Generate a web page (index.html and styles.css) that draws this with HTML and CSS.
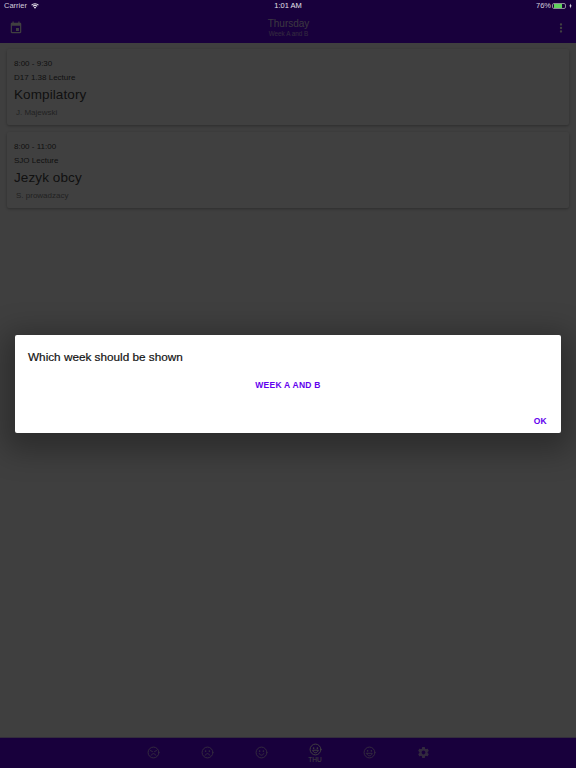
FILE: index.html
```html
<!DOCTYPE html>
<html lang="en">
<head>
<meta charset="utf-8">
<title>Thursday</title>
<link rel="stylesheet" href="styles.css">
</head>
<body>
<div class="app">
  <header class="header">
    <div class="statusbar">
      <div class="status-left">
        <span>Carrier</span>
        <svg class="wifi" viewBox="0 0 16 12"><path d="M8 11.500 5.600 8.900a3.400 3.400 0 0 1 4.800 0zM4.400 7.700 3 6.200a7 7 0 0 1 10 0l-1.400 1.500a5 5 0 0 0-7.200 0zM1.800 5 .4 3.500a10.700 10.700 0 0 1 15.200 0L14.200 5a8.800 8.800 0 0 0-12.400 0z"/></svg>
      </div>
      <div class="status-time">1:01 AM</div>
      <div class="status-right">
        <span>76%</span>
        <span class="battery"><span class="battery-fill"></span></span>
        <svg class="bolt" viewBox="0 0 5 8"><path d="M3 0 .5 4.500H2L1.700 8l2.800-4.800H3z"/></svg>
      </div>
    </div>
    <div class="toolbar">
      <svg class="tool-icon" viewBox="0 0 24 24"><path d="M17 12h-5v5h5v-5zM16 1v2H8V1H6v2H5c-1.110 0-2 .9-2 2v14c0 1.100.89 2 2 2h14c1.100 0 2-.9 2-2V5c0-1.100-.9-2-2-2h-1V1h-2zm3 18H5V8h14v11z"/></svg>
      <div class="title-block">
        <div class="title">Thursday</div>
        <div class="subtitle">Week A and B</div>
      </div>
      <svg class="tool-icon" viewBox="0 0 24 24"><path d="M12 8a2 2 0 1 0 0-4 2 2 0 0 0 0 4zm0 2a2 2 0 1 0 0 4 2 2 0 0 0 0-4zm0 6a2 2 0 1 0 0 4 2 2 0 0 0 0-4z"/></svg>
    </div>
  </header>

  <main class="list">
    <article class="card">
      <div class="line">8:00 - 9:30</div>
      <div class="line room">D17 1.38 Lecture</div>
      <div class="name">Kompilatory</div>
      <div class="teacher">J. Majewski</div>
    </article>
    <article class="card">
      <div class="line">8:00 - 11:00</div>
      <div class="line room">SJO Lecture</div>
      <div class="name">Jezyk obcy</div>
      <div class="teacher">S. prowadzacy</div>
    </article>
  </main>

  <nav class="tabs">
    <div class="tab"><svg class="face" viewBox="0 0 24 24"><circle cx="12" cy="12" r="10"/><path d="M6.500 8.500 10 10.200M17.500 8.500 14 10.200M8 17c1-2 2.400-3 4-3s3 1 4 3"/></svg></div>
    <div class="tab"><svg class="face" viewBox="0 0 24 24"><circle cx="12" cy="12" r="10"/><circle class="eye" cx="8.500" cy="9.500" r="1.500"/><circle class="eye" cx="15.500" cy="9.500" r="1.500"/><path d="M8 17c1-2 2.400-3 4-3s3 1 4 3"/></svg></div>
    <div class="tab"><svg class="face" viewBox="0 0 24 24"><circle cx="12" cy="12" r="10"/><circle class="eye" cx="8.500" cy="9.500" r="1.500"/><circle class="eye" cx="15.500" cy="9.500" r="1.500"/><path d="M8 14c1 2 2.400 3 4 3s3-1 4-3"/></svg></div>
    <div class="tab tab-active"><svg class="face" viewBox="0 0 24 24"><circle cx="12" cy="12" r="10"/><circle class="eye" cx="8.500" cy="9.500" r="1.500"/><circle class="eye" cx="15.500" cy="9.500" r="1.500"/><path d="M7 14c1 2.500 2.800 4 5 4s4-1.500 5-4z"/></svg><span class="tab-label">THU</span></div>
    <div class="tab"><svg class="face" viewBox="0 0 24 24"><circle cx="12" cy="12" r="10"/><circle class="eye" cx="8.500" cy="9" r="1.500"/><circle class="eye" cx="15.500" cy="9" r="1.500"/><path d="M7 13.500h10c-.5 3-2.500 4.500-5 4.500s-4.500-1.500-5-4.500z"/></svg></div>
    <div class="tab"><svg class="gear" viewBox="0 0 24 24"><path d="M19.430 12.980c.04-.32.07-.64.07-.98s-.03-.66-.07-.98l2.110-1.650c.19-.15.24-.42.12-.64l-2-3.460c-.12-.22-.39-.3-.61-.22l-2.490 1c-.52-.4-1.080-.73-1.690-.98l-.38-2.650A.488.488 0 0 0 14 2h-4c-.25 0-.46.18-.49.42l-.38 2.650c-.61.25-1.170.59-1.690.98l-2.490-1c-.23-.09-.49 0-.61.22l-2 3.460c-.13.22-.07.49.12.64l2.110 1.650c-.04.32-.07.65-.07.98s.03.66.07.98l-2.110 1.650c-.19.15-.24.42-.12.64l2 3.460c.12.22.39.3.61.22l2.490-1c.52.4 1.080.73 1.690.98l.38 2.650c.03.24.24.42.49.42h4c.25 0 .46-.18.49-.42l.38-2.650c.61-.25 1.170-.59 1.690-.98l2.490 1c.23.09.49 0 .61-.22l2-3.460c.12-.22.07-.49-.12-.64l-2.110-1.650zM12 15.500c-1.930 0-3.500-1.570-3.500-3.500s1.570-3.500 3.500-3.500 3.500 1.570 3.500 3.500-1.570 3.500-3.500 3.500z"/></svg></div>
  </nav>

  <div class="scrim">
    <section class="dialog">
      <h2 class="dialog-title">Which week should be shown</h2>
      <button class="week-option">WEEK A AND B</button>
      <div class="dialog-actions"><button class="ok">OK</button></div>
    </section>
  </div>
</div>
</body>
</html>
```

FILE: styles.css
```css
* { box-sizing: border-box; }
html, body { margin: 0; height: 100%; }
body { font-family: "Liberation Sans", Arial, sans-serif; background: #fafafa; overflow: hidden; }
.app { position: relative; display: flex; flex-direction: column; height: 768px; width: 576px; }

.header { background: #6200ee; height: 43px; color: #fff; flex: none; }
.statusbar {
  position: relative; z-index: 3; display: flex; justify-content: space-between; align-items: center;
  height: 12px; padding: 0 3px 0 4px; font-size: 7.500px; line-height: 12px; color: #d4cfdc;
}
.status-left, .status-right { display: flex; align-items: center; gap: 4px; flex: 1; }
.status-right { justify-content: flex-end; gap: 1px; padding-right: 1px; }
.status-time { position: absolute; left: 0; right: 0; text-align: center; color: #e4e0ea; }
.wifi { width: 8px; height: 6px; fill: #e4e0ea; }
.battery { display: block; width: 14px; height: 6.500px; border: 1px solid #8d8996; border-radius: 2px; padding: .5px; }
.battery-fill { display: block; width: 76%; height: 100%; background: #5fd35c; }
.bolt { width: 3px; height: 6px; fill: #e4e0ea; margin-left: 2px; }

.toolbar { display: flex; align-items: center; justify-content: space-between; height: 31px; padding: 0 8px 0 9px; }
.tool-icon { width: 14px; height: 14px; fill: #fff; }
.title-block { text-align: center; }
.title { font-size: 10px; line-height: 12px; color: rgba(255,255,255,.85); }
.subtitle { font-size: 6.300px; line-height: 8px; opacity: .65; }

.list { flex: 1; padding: 6px 7px; display: flex; flex-direction: column; gap: 7px; }
.card {
  background: #fff; height: 76px; padding: 9px 7px 0; border-radius: 2px;
  box-shadow: 0 1px 3px rgba(0,0,0,.3);
}
.line { font-size: 8px; line-height: 11px; color: #444; }
.room { margin-top: 3px; }
.name { margin-top: 3px; font-size: 13.500px; line-height: 18px; color: #444; letter-spacing: .1px; }
.teacher { margin-top: 3px; padding-left: 2px; font-size: 8px; line-height: 11px; color: #888; }

.tabs { flex: none; display: flex; justify-content: center; height: 31px; background: #6200ee; border-top: 1px solid #c9b3ee; }
.tab { width: 54px; display: flex; flex-direction: column; align-items: center; justify-content: center; color: #fff; padding-bottom: 2px; }
.face { width: 13px; height: 13px; fill: none; stroke: #c8a9f5; stroke-width: 1.800; stroke-linecap: round; }
.face .eye { fill: #c8a9f5; stroke: none; }
.gear { width: 13px; height: 13px; fill: #c8a9f5; }
.tab-active { padding-bottom: 0; }
.tab-active .face { stroke: #fff; }
.tab-active .face .eye { fill: #fff; }
.tab-label { font-size: 6.500px; line-height: 8px; }

.scrim {
  position: absolute; inset: 0; z-index: 2; background: rgba(0,0,0,.75);
  display: flex; align-items: flex-start; justify-content: center; padding-top: 335px;
}
.dialog {
  width: 546px; height: 98px; background: #fff; border-radius: 2px;
  padding: 15px 13px 0; box-shadow: 0 8px 30px 10px rgba(0,0,0,.3);
  display: flex; flex-direction: column;
}
.dialog-title { margin: 0; font-size: 11.750px; line-height: 14px; font-weight: 400; color: #111; -webkit-text-stroke: .2px #111; }
.week-option, .ok {
  border: 0; background: none; padding: 0; font: 700 8.500px/10px "Liberation Sans", Arial, sans-serif;
  color: #6200ee; letter-spacing: .25px;
}
.week-option { margin-top: 16px; align-self: center; }
.dialog-actions { margin-top: auto; display: flex; justify-content: flex-end; padding: 0 1px 7px 0; }
```
